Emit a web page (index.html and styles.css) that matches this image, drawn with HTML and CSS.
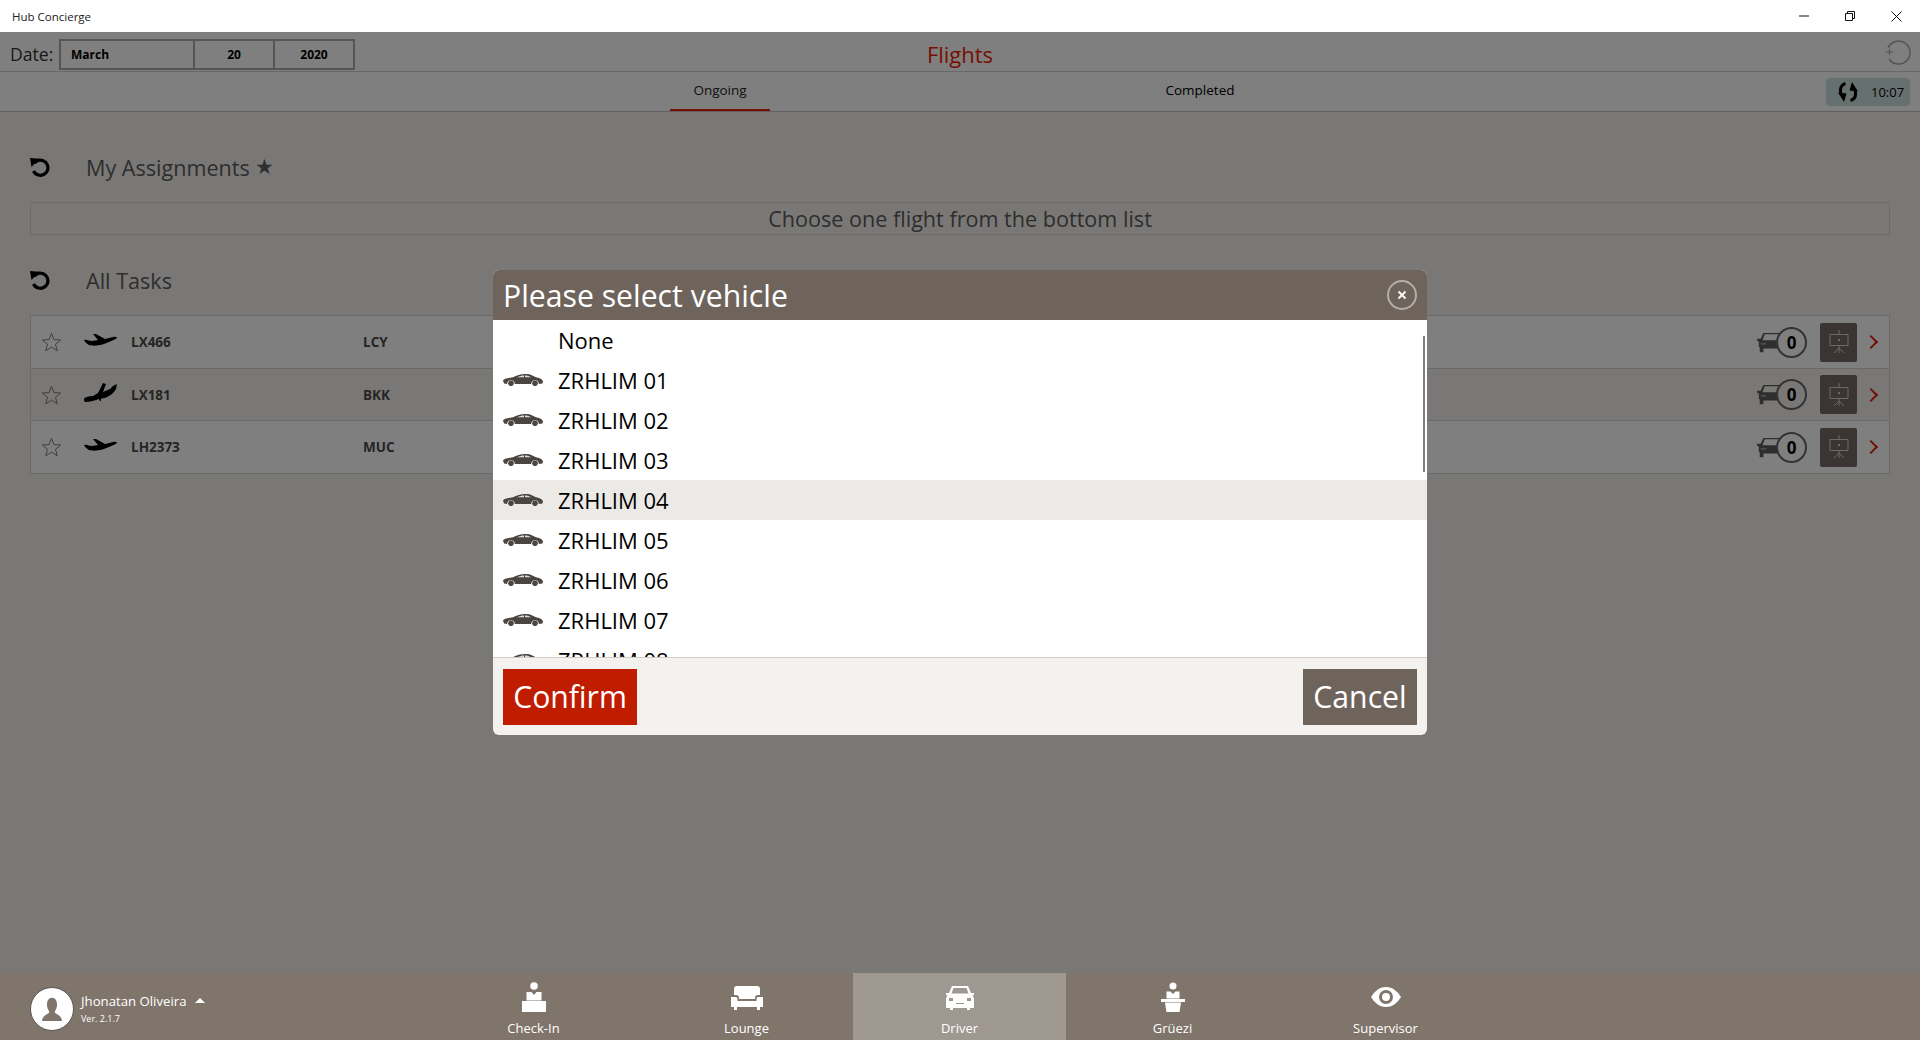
FILE: index.html
```html
<!DOCTYPE html>
<html lang="en">
<head>
  <meta charset="UTF-8">
  <title>Hub Concierge</title>
  <link rel="stylesheet" href="styles.css">
</head>
<body>

  <svg class="defs" width="0" height="0">
    <symbol id="undo" viewBox="0 0 20 20">
      <path d="M4.200 6.200A7.600 7.600 0 1 1 3.500 14" fill="none" stroke="currentColor" stroke-width="3.200"/>
      <path d="M0 1 L9 1.800 L1.500 10Z" fill="currentColor"/>
    </symbol>
    <symbol id="star" viewBox="0 0 22 20">
      <path d="M11 1 L13.600 7.500 L20.600 7.900 L15.200 12.400 L17 19.200 L11 15.400 L5 19.200 L6.800 12.400 L1.400 7.900 L8.400 7.500Z" fill="none" stroke="currentColor" stroke-width="1"/>
    </symbol>
    <symbol id="takeoff" viewBox="0 0 33 14">
      <path d="M0 7 C3 6 5 8 8 8 L14 7 L9 1 L12 1 L21 6 L29 4 C32 3.500 33.500 4.500 32.500 5.500 C30 7 25 9 20 11 C14 13 8 13 5 12 C3 11 1 9 0 7Z"/>
    </symbol>
    <symbol id="landing" viewBox="0 0 33 20">
      <path d="M0 16 C1 14 5 13 9 13 L14 10 L19 0 L22 1 L19 9 L26 6 L29 3 L33 1 L32 6 C30 10 26 13 21 15 L17 15.500 L17 18 L16 18 L15 16 C10 18 5 19 1 19 C0 18.500 0 17 0 16Z"/>
    </symbol>
    <symbol id="carfront" viewBox="0 0 24 23">
      <path d="M7 1 H24 V2.500 H8.500 L6 9 H23 V18 H7 V22 H3 V17 L2 16 V10.500 L0 9.500 V7.500 H4Z"/>
      <path d="M4 12 H10 V14 H4Z" fill="#999"/>
    </symbol>
    <symbol id="easel" viewBox="0 0 20 24">
      <path d="M10 0 V4 M1 4.500 H19 V15.500 H1Z M10 15.500 V19 M10 18 L5 23 M10 18 L15 23 M10 18 V23" fill="none" stroke="currentColor" stroke-width="1"/>
      <rect x="9" y="9" width="2" height="2" fill="currentColor"/>
    </symbol>
    <symbol id="sedan" viewBox="0 0 40 13">
      <path d="M0 7.500 C1 5.500 5 5 10 4.200 C14 1.800 19 0.500 25 1 C28 1.500 31 3.300 33 4.300 C36 5 39 6 40 8 L39.500 10.500 L35.800 11 A3.800 3.800 0 0 0 28.200 11 H11.800 A3.800 3.800 0 0 0 4.200 11 L1 10.500Z"/>
      <path d="M14 4.200 C16.500 3 19 2.400 21 2.400 V4.200Z M22 2.400 C24.500 2.400 26.500 3 28 4.200 H22Z" fill="#d8d8d8"/>
      <circle cx="8" cy="10.300" r="2.800"/>
      <circle cx="32" cy="10.300" r="2.800"/>
    </symbol>
  </svg>

  <div class="titlebar">
    <span class="app-name">Hub Concierge</span>
    <div class="win-controls">
      <svg width="10" height="2" viewBox="0 0 10 2"><path d="M0 1H10" stroke="#111" stroke-width="1"/></svg>
      <svg width="10" height="10" viewBox="0 0 10 10"><path d="M.5 2.500H7.500V9.500H.5Z M2.500 2.500V.5H9.500V7.500H7.500" fill="none" stroke="#111"/></svg>
      <svg width="11" height="11" viewBox="0 0 11 11"><path d="M.5 .5L10.500 10.500M10.500 .5L.5 10.500" stroke="#111"/></svg>
    </div>
  </div>

  <div class="main">
    <div class="date-row">
      <span class="date-label">Date:</span>
      <div class="date-box">
        <span class="date-month">March</span>
        <span class="date-day">20</span>
        <span class="date-year">2020</span>
      </div>
      <h1 class="page-title">Flights</h1>
      <svg class="reload" width="26" height="26" viewBox="0 0 26 26">
        <path d="M3 9A11.500 11.500 0 1 1 4 20" fill="none" stroke="#a9a9a9" stroke-width="1.500"/>
        <path d="M1 13H8M4.500 10V16" stroke="#a9a9a9" stroke-width="1.200"/>
      </svg>
    </div>

    <div class="tabs-row">
      <div class="tab tab-active">Ongoing</div>
      <div class="tab tab-second">Completed</div>
      <div class="sync-box">
        <svg width="20" height="20" viewBox="0 0 20 20">
          <path d="M7.500 1.500C3.500 2.500 1.500 6 3 12M12.500 18.500C16.500 17.500 18.500 14 17 8" fill="none" stroke="#000" stroke-width="3"/>
          <path d="M0 10.500L8.500 11.500L6 20ZM20 9.500L11.500 8.500L14 0Z"/>
        </svg>
        <span>10:07</span>
      </div>
    </div>

    <div class="content">
      <div class="section-head">
        <svg class="undo"><use href="#undo"/></svg>
        <span class="section-name">My Assignments</span>
        <span class="head-star">★</span>
      </div>
      <div class="assign-box">Choose one flight from the bottom list</div>

      <div class="section-head head-tasks">
        <svg class="undo"><use href="#undo"/></svg>
        <span class="section-name">All Tasks</span>
      </div>
      <div class="task-list">
        <div class="task">
          <svg class="task-star"><use href="#star"/></svg>
          <svg class="plane"><use href="#takeoff"/></svg>
          <span class="flight">LX466</span>
          <span class="dest">LCY</span>
          <svg class="car"><use href="#carfront"/></svg>
          <span class="count">0</span>
          <div class="easel-btn"><svg><use href="#easel"/></svg></div>
          <span class="chevron"></span>
        </div>
        <div class="task task-alt">
          <svg class="task-star"><use href="#star"/></svg>
          <svg class="plane plane-land"><use href="#landing"/></svg>
          <span class="flight">LX181</span>
          <span class="dest">BKK</span>
          <svg class="car"><use href="#carfront"/></svg>
          <span class="count">0</span>
          <div class="easel-btn"><svg><use href="#easel"/></svg></div>
          <span class="chevron"></span>
        </div>
        <div class="task">
          <svg class="task-star"><use href="#star"/></svg>
          <svg class="plane"><use href="#takeoff"/></svg>
          <span class="flight">LH2373</span>
          <span class="dest">MUC</span>
          <svg class="car"><use href="#carfront"/></svg>
          <span class="count">0</span>
          <div class="easel-btn"><svg><use href="#easel"/></svg></div>
          <span class="chevron"></span>
        </div>
      </div>
    </div>

    <div class="overlay">
      <div class="dialog">
        <div class="dialog-head">
          <span>Please select vehicle</span>
          <div class="dialog-close">
            <svg width="10" height="10" viewBox="0 0 10 10"><path d="M1.500 1.500L8.500 8.500M8.500 1.500L1.500 8.500" stroke="#fff" stroke-width="1.800"/></svg>
          </div>
        </div>
        <div class="vehicle-list">
          <div class="scroll-thumb"></div>
          <div class="vehicle"><span class="no-icon"></span>None</div>
          <div class="vehicle"><svg class="sedan"><use href="#sedan"/></svg>ZRHLIM 01</div>
          <div class="vehicle"><svg class="sedan"><use href="#sedan"/></svg>ZRHLIM 02</div>
          <div class="vehicle"><svg class="sedan"><use href="#sedan"/></svg>ZRHLIM 03</div>
          <div class="vehicle vehicle-hover"><svg class="sedan"><use href="#sedan"/></svg>ZRHLIM 04</div>
          <div class="vehicle"><svg class="sedan"><use href="#sedan"/></svg>ZRHLIM 05</div>
          <div class="vehicle"><svg class="sedan"><use href="#sedan"/></svg>ZRHLIM 06</div>
          <div class="vehicle"><svg class="sedan"><use href="#sedan"/></svg>ZRHLIM 07</div>
          <div class="vehicle"><svg class="sedan"><use href="#sedan"/></svg>ZRHLIM 08</div>
        </div>
        <div class="dialog-foot">
          <button class="btn btn-confirm">Confirm</button>
          <button class="btn btn-cancel">Cancel</button>
        </div>
      </div>
    </div>
  </div>

  <div class="bottom-nav">
    <div class="user">
      <div class="avatar">
        <svg width="20" height="24" viewBox="0 0 30 30" preserveAspectRatio="none"><path d="M15 1C20 1 23 5 22.500 11C22 15 19.500 17 19 19C21 22 29 22 30 30H0C1 22 9 22 11 19C10.500 17 8 15 7.500 11C7 5 10 1 15 1Z" fill="#80756b"/></svg>
      </div>
      <div class="user-text">
        <div class="user-name">Jhonatan Oliveira <span class="caret"></span></div>
        <div class="user-ver">Ver. 2.1.7</div>
      </div>
    </div>
    <div class="nav-item">
      <svg width="26" height="30" viewBox="0 0 26 30"><circle cx="13" cy="4" r="3.800"/><path d="M5.500 10H10.500L13 13L15.500 10H20.500V18.500H5.500Z"/><path d="M1 19H25V30H1Z"/></svg>
      <span>Check-In</span>
    </div>
    <div class="nav-item">
      <svg width="32" height="30" viewBox="0 0 32 30"><path d="M6 4H26C28 4 29 5 29 7V13H27C25 13 24 14 24 16V17H8V16C8 14 7 13 5 13H3V7C3 5 4 4 6 4Z"/><path d="M0 15H5C6 15 6.500 16 6.500 17V19H25.500V17C25.500 16 26 15 27 15H32V25H29V28H26V25H6V28H3V25H0Z"/></svg>
      <span>Lounge</span>
    </div>
    <div class="nav-item nav-active">
      <svg width="30" height="30" viewBox="0 0 30 30"><path fill-rule="evenodd" d="M7 4H23L26 11H29V13L27.500 13.500L29 16V26H25V28H22V26H8V28H5V26H1V16L2.500 13.500L1 13V11H4ZM8.500 6L6.500 11.500H23.500L21.500 6ZM4 16V19H8V16ZM22 16V19H26V16ZM11 21V22H19V21Z"/></svg>
      <span>Driver</span>
    </div>
    <div class="nav-item">
      <svg width="24" height="30" viewBox="0 0 24 30"><circle cx="12" cy="4" r="3.500"/><path d="M5.500 9.500H9.500L12 12L14.500 9.500H18.500V16.500H5.500Z"/><path d="M0 17H24V20H0Z"/><path d="M4 20.500H20L18.500 30H5.500Z"/></svg>
      <span>Grüezi</span>
    </div>
    <div class="nav-item">
      <svg width="30" height="30" viewBox="0 0 30 30"><path fill-rule="evenodd" d="M15 5C22 5 27 10 30 15C27 20 22 25 15 25C8 25 3 20 0 15C3 10 8 5 15 5ZM15 8A7 7 0 1 0 15 22A7 7 0 1 0 15 8ZM15 11A4 4 0 1 1 15 19A4 4 0 1 1 15 11Z"/></svg>
      <span>Supervisor</span>
    </div>
  </div>

</body>
</html>
```

FILE: styles.css
```css
* {
  box-sizing: border-box;
}

body {
  margin: 0;
  height: 1040px;
  overflow: hidden;
  display: flex;
  flex-direction: column;
  font-family: 'Open Sans', 'Noto Sans', sans-serif;
  background: #f4f1ec;
  color: #000;
}

.defs {
  position: absolute;
}

/* window chrome */
.titlebar {
  height: 32px;
  background: #fff;
  display: flex;
  align-items: center;
  justify-content: space-between;
  padding-left: 12px;
  font-size: 11.5px;
  color: #222;
}

.win-controls {
  display: flex;
  align-items: center;
  gap: 36px;
  padding-right: 18px;
}

/* main area, dimmed by the overlay */
.main {
  position: relative;
  flex: 1;
  min-height: 0;
}

.date-row {
  height: 40px;
  padding: 5px 0 0 10px;
  background: #fff;
  border-bottom: 1px solid #d0d0d0;
  display: flex;
  align-items: center;
  position: relative;
}

.date-label {
  font-size: 17.6px;
  color: #333;
  width: 49px;
}

.date-box {
  display: flex;
  width: 296px;
  height: 31px;
  border: 2px solid #aaa;
  font-size: 12px;
  font-weight: 700;
  line-height: 27px;
  color: #000;
}

.date-month {
  width: 134px;
  padding-left: 10px;
  border-right: 2px solid #aaa;
}

.date-day {
  width: 80px;
  text-align: center;
  border-right: 2px solid #aaa;
}

.date-year {
  flex: 1;
  text-align: center;
}

.page-title {
  margin: 0;
  font-size: 22px;
  font-weight: 400;
  color: #f01c08;
  position: absolute;
  left: 0;
  right: 0;
  text-align: center;
}

.reload {
  margin: -5px 9px 0 auto;
}

.tabs-row {
  height: 40px;
  background: #fff;
  border-bottom: 1px solid #c0c0c0;
  display: flex;
  align-items: center;
  position: relative;
  font-size: 13.5px;
  color: #000;
}

.tab {
  position: absolute;
  top: 0;
  height: 39px;
  line-height: 36px;
  text-align: center;
  width: 100px;
}

.tab-active {
  left: 670px;
  border-bottom: 2px solid #f01c08;
  color: #222;
}

.tab-second {
  left: 1150px;
}

.sync-box {
  margin-left: auto;
  margin-right: 10px;
  width: 84px;
  height: 28px;
  background: #cce0de;
  border-radius: 4px;
  display: flex;
  align-items: center;
  gap: 13px;
  padding-left: 12px;
  font-size: 13px;
}

.content {
  padding: 36px 30px 0;
}

.section-head {
  display: flex;
  align-items: center;
  height: 40px;
  font-size: 21.6px;
  color: #5c5c5c;
}

.section-name {
  margin-top: -2px;
}

.head-tasks {
  margin-top: 26px;
}

.undo {
  width: 20px;
  height: 20px;
  margin-right: 36px;
  color: #000;
  margin-top: -2px;
}

.head-star {
  font-size: 21px;
  margin-left: 5px;
  margin-top: -4px;
}

.assign-box {
  margin-top: 14px;
  height: 33px;
  border: 1px solid #d8d8d4;
  text-align: center;
  font-size: 21.6px;
  line-height: 31px;
  color: #5c5c5c;
}

.task-list {
  margin-top: 14px;
  border: 1px solid #d4d4d0;
}

.task {
  height: 52px;
  background: #fff;
  border-bottom: 1px solid #d4d4d0;
  display: flex;
  align-items: center;
  padding-left: 10px;
  color: #444;
}

.task:first-child {
  height: 53px;
}

.task:last-child {
  border-bottom: none;
}

.task-alt {
  background: #f4f1ec;
}

.task-star {
  width: 21px;
  height: 20px;
  color: #777;
}

.plane {
  width: 33px;
  height: 14px;
  margin-left: 22px;
  color: #000;
  fill: #000;
  margin-top: -4px;
}

.plane-land {
  height: 20px;
}

.flight {
  width: 232px;
  margin-left: 14px;
  font-size: 13.5px;
  font-weight: 700;
  color: #4a4a4a;
}

.dest {
  font-size: 13.5px;
  font-weight: 700;
  color: #4a4a4a;
}

.car {
  width: 22px;
  height: 23px;
  margin-left: auto;
  fill: #5c5c5c;
}

.count {
  width: 31px;
  height: 31px;
  margin-left: -3px;
  border: 2px solid #666;
  border-radius: 50%;
  font-size: 17px;
  font-weight: 700;
  line-height: 27px;
  text-align: center;
  color: #000;
}

.easel-btn {
  width: 37px;
  height: 39px;
  margin-left: 13px;
  background: #746a64;
  border-radius: 2px;
  display: flex;
  align-items: center;
  justify-content: center;
}

.easel-btn svg {
  width: 20px;
  height: 24px;
  color: #fff;
  opacity: .7;
}

.chevron {
  width: 10px;
  height: 10px;
  margin: 0 13px 0 9px;
  border-top: 2px solid #e6200a;
  border-right: 2px solid #e6200a;
  transform: rotate(45deg);
}

.overlay {
  position: absolute;
  top: 0;
  left: 0;
  right: 0;
  bottom: 0;
  background: rgba(0, 0, 0, 0.5);
  display: flex;
  align-items: center;
  justify-content: center;
}

.dialog {
  width: 934px;
  height: 465px;
  border-radius: 6px;
  overflow: hidden;
  display: flex;
  flex-direction: column;
  background: #f3f2ee;
}

.dialog-head {
  height: 50px;
  flex: none;
  background: #6f645c;
  color: #fff;
  font-size: 30.2px;
  display: flex;
  align-items: center;
  justify-content: space-between;
  padding: 0 10px;
}

.dialog-close {
  width: 30px;
  height: 30px;
  border: 2px solid #b5afaa;
  border-radius: 50%;
  display: flex;
  align-items: center;
  justify-content: center;
}

.vehicle-list {
  position: relative;
  height: 338px;
  flex: none;
  overflow: hidden;
  background: #fff;
  border-bottom: 1px solid #cfccc6;
}

.scroll-thumb {
  position: absolute;
  top: 16px;
  right: 2px;
  width: 2px;
  height: 136px;
  background: #808080;
}

.vehicle {
  height: 40px;
  display: flex;
  align-items: center;
  padding-left: 10px;
  font-size: 22px;
  color: #000;
}

.vehicle-hover {
  background: #eceae6;
}

.sedan {
  width: 40px;
  height: 13px;
  fill: #4a4541;
  margin: -1px 15px 0 0;
  flex: none;
}

.no-icon {
  width: 55px;
  flex: none;
}

.dialog-foot {
  flex: 1;
  display: flex;
  justify-content: space-between;
  align-items: center;
  padding: 0 10px;
}

.btn {
  height: 56px;
  border: none;
  color: #fff;
  font-family: inherit;
  font-size: 30.2px;
  padding: 0 10px;
}

.btn-confirm {
  width: 134px;
  background: #c01c00;
}

.btn-cancel {
  width: 114px;
  background: #6f645c;
}

/* bottom navigation, not dimmed */
.bottom-nav {
  height: 67px;
  flex: none;
  background: #80756b;
  color: #fff;
  display: flex;
}

.user {
  width: 427px;
  display: flex;
  align-items: center;
  padding-left: 30px;
  padding-top: 4px;
}

.avatar {
  width: 44px;
  height: 44px;
  border-radius: 50%;
  background: #fff;
  border: 1px solid #555;
  display: flex;
  align-items: center;
  justify-content: center;
}

.user-text {
  margin-left: 7px;
}

.user-name {
  font-size: 13.2px;
  line-height: 18px;
}

.caret {
  display: inline-block;
  width: 0;
  height: 0;
  margin-left: 5px;
  vertical-align: 3px;
  border-left: 5px solid transparent;
  border-right: 5px solid transparent;
  border-bottom: 5px solid #fff;
}

.user-ver {
  font-size: 9px;
  line-height: 14px;
  margin-top: 2px;
}

.nav-item {
  width: 213px;
  display: flex;
  flex-direction: column;
  align-items: center;
  padding-top: 9px;
  font-size: 13px;
  fill: #fff;
}

.nav-item svg {
  height: 30px;
  flex: none;
}

.nav-item span {
  margin-top: 7px;
  line-height: 18px;
}

.nav-active {
  background: #9f9890;
}
```
